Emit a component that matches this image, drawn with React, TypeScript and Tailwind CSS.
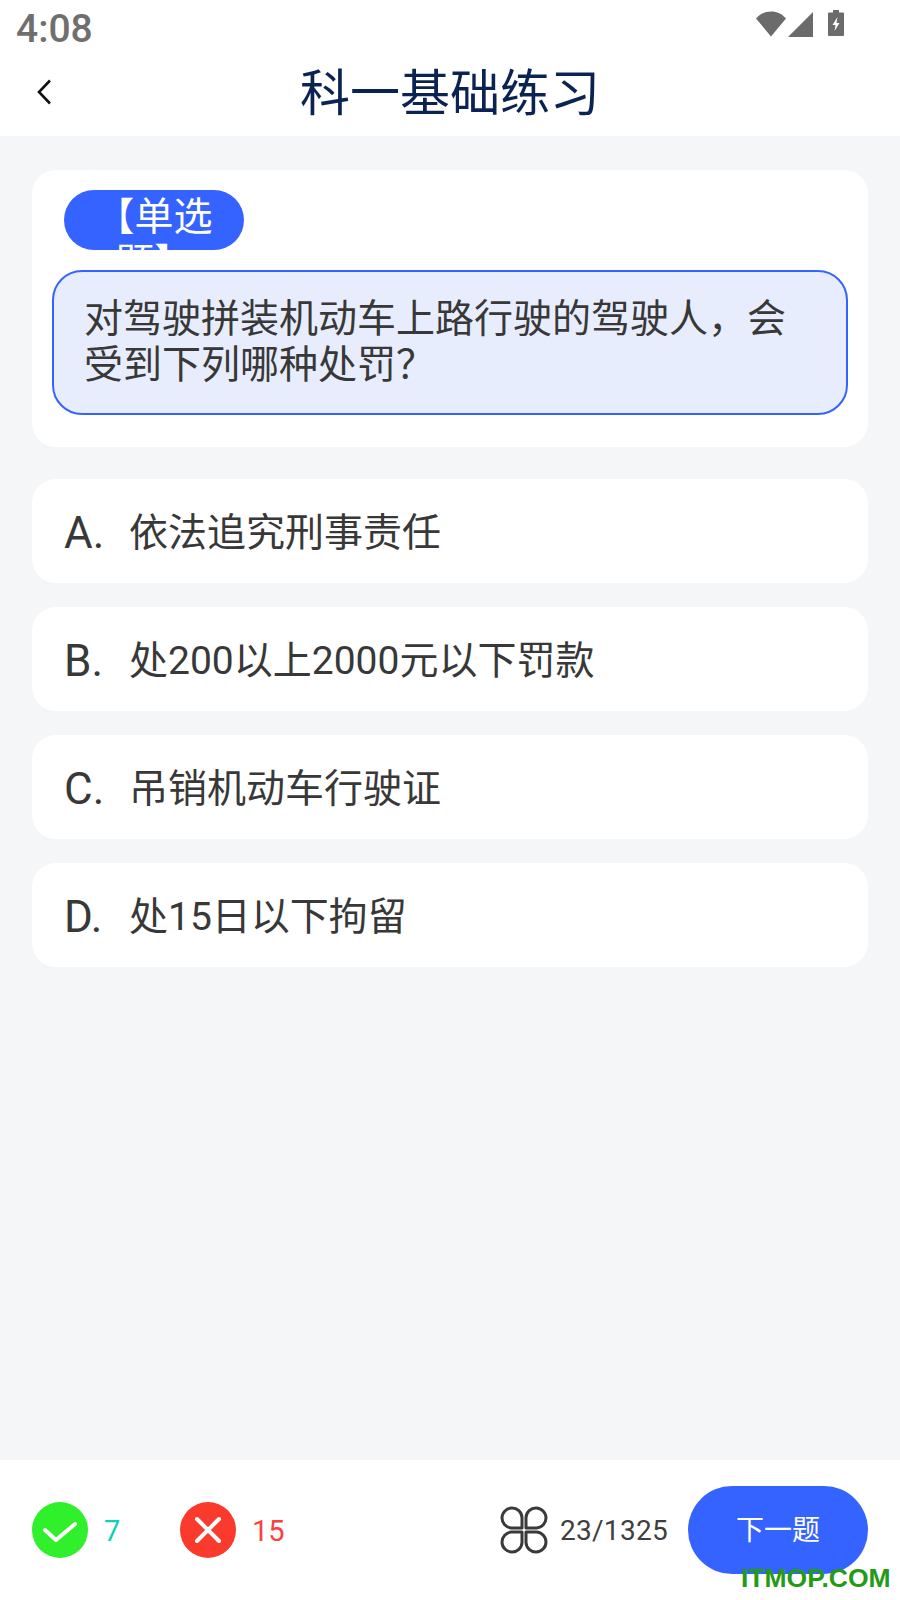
import React from "react";

const FONT = "font-['Roboto','Noto_Sans_CJK_SC',sans-serif]";

function Option({ label, text }: { label: string; text: string }) {
  return (
    <div className="flex h-[104px] items-center rounded-[24px] bg-white pl-[32px] pt-[3px] text-[39px] leading-[46px] text-[#383838]">
      <span className="w-[65px] shrink-0 text-[44px] font-normal">{label}</span>
      <span>{text}</span>
    </div>
  );
}

export default function App() {
  return (
    <div className={`relative flex h-[1600px] w-[900px] flex-col overflow-hidden bg-[#f5f6f8] ${FONT}`}>
      <header className="h-[136px] shrink-0 bg-white">
        <div className="flex h-[58px] items-start justify-between pl-[16px] pr-[56px] pt-[8px]">
          <span className="text-[39px] font-medium leading-[42px] text-[#6f6f6f]">4:08</span>
          <div className="flex items-start gap-[2px] pt-[3px]">
            <svg width="30" height="26" viewBox="0 0 30 26">
              <path d="M0 7.5C4 3 9 0.5 15 0.5S26 3 30 7.5L15 25.5Z" fill="#6b6b6b" />
            </svg>
            <svg width="25" height="25" viewBox="0 0 25 25" className="mt-[1px]">
              <path d="M25 0V25H0Z" fill="#6b6b6b" />
            </svg>
            <svg width="16" height="26" viewBox="0 0 16 26" className="ml-[13px] -mt-[1px]">
              <path d="M5 0H11V2.5H15Q16 2.5 16 3.5V25Q16 26 15 26H1Q0 26 0 25V3.5Q0 2.5 1 2.5H5Z" fill="#6b6b6b" />
              <path d="M9.5 7L4.5 15H7.5L6.5 21L11.5 13H8.5Z" fill="#ffffff" />
            </svg>
          </div>
        </div>
        <div className="relative flex h-[72px] items-center justify-center">
          <svg width="16" height="26" viewBox="0 0 16 26" className="absolute left-[36px] top-[21px]">
            <path d="M14 1.5L3 13L14 24.5" fill="none" stroke="#111111" strokeWidth="2.6" />
          </svg>
          <h1 className="text-[50px] font-normal leading-[60px] text-[#0b2352]">科一基础练习</h1>
        </div>
      </header>

      <main className="flex flex-1 flex-col gap-[24px] px-[32px] pt-[34px]">
        <section className="mb-[8px] h-[277px] rounded-[24px] bg-white px-[20px] pt-[20px]">
          <div className="ml-[12px] h-[60px] w-[180px] overflow-hidden rounded-[30px] bg-[#3563ff] px-[5px] pt-[4px] text-center text-[39px] leading-[46px] text-white">
            【单选题】
          </div>
          <div className="mt-[20px] h-[145px] rounded-[30px] border-2 border-[#3563ff] bg-[#e8edfd] pl-[30px] pr-[30px] pt-[24px] text-[39px] leading-[46px] text-[#383838]">
            对驾驶拼装机动车上路行驶的驾驶人，会受到下列哪种处罚？
          </div>
        </section>
        <Option label="A." text="依法追究刑事责任" />
        <Option label="B." text="处200以上2000元以下罚款" />
        <Option label="C." text="吊销机动车行驶证" />
        <Option label="D." text="处15日以下拘留" />
      </main>

      <footer className="flex h-[140px] shrink-0 items-center bg-white pl-[32px] pr-[32px]">
        <svg width="56" height="56" viewBox="0 0 56 56" className="shrink-0">
          <circle cx="28" cy="28" r="28" fill="#2ff02a" />
          <path d="M13 28L24 38L43 22" fill="none" stroke="#ffffff" strokeWidth="4" strokeLinecap="round" strokeLinejoin="round" />
        </svg>
        <span className="ml-[16px] w-[76px] pt-[2px] text-[29px] leading-[36px] text-[#0fd0b0]">7</span>
        <svg width="56" height="56" viewBox="0 0 56 56" className="shrink-0">
          <circle cx="28" cy="28" r="28" fill="#f93a2c" />
          <path d="M17 17L39 39M39 17L17 39" fill="none" stroke="#ffffff" strokeWidth="4" strokeLinecap="round" />
        </svg>
        <span className="ml-[16px] pt-[2px] text-[29px] leading-[36px] text-[#fb4040]">15</span>
        <div className="ml-auto flex items-center">
          <svg width="48" height="48" viewBox="0 0 48 48" className="shrink-0">
            <g fill="none" stroke="#3a3a3a" strokeWidth="3">
              <path d="M22 22H11.5A10 10 0 1 1 22 11.5Z" strokeLinejoin="round" />
              <path d="M26 22H36.5A10 10 0 1 0 26 11.5Z" strokeLinejoin="round" />
              <path d="M22 26H11.5A10 10 0 1 0 22 36.5Z" strokeLinejoin="round" />
              <path d="M26 26H36.5A10 10 0 1 1 26 36.5Z" strokeLinejoin="round" />
            </g>
          </svg>
          <span className="ml-[12px] pt-[2px] text-[28px] leading-[36px] tracking-[0.3px] text-[#3f3f3f]">23/1325</span>
          <button className="ml-[20px] flex h-[88px] w-[180px] items-center justify-center rounded-[44px] bg-[#3563ff] pt-[2px] text-[28px] text-white">
            下一题
          </button>
        </div>
      </footer>

      <span className="absolute left-[741px] top-[1563px] font-['Liberation_Sans',sans-serif] text-[26.5px] font-bold leading-[30px] text-[#259a17]">
        ITMOP.COM
      </span>
    </div>
  );
}
